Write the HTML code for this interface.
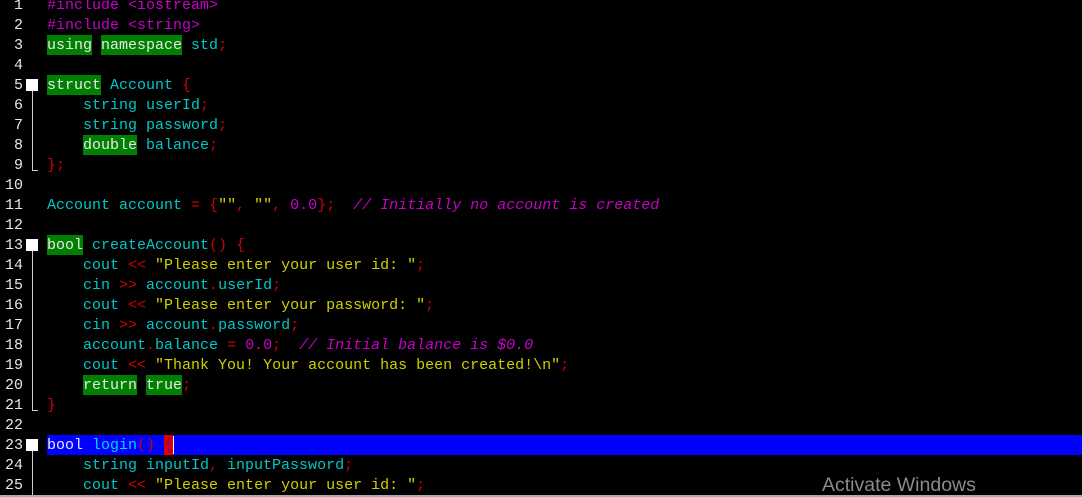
<!DOCTYPE html>
<html><head><style>
body{margin:0;width:1082px;height:497px;background:#000;overflow:hidden;position:relative;font-family:"Liberation Mono",monospace;font-size:15px;}
.l{position:absolute;left:0;height:20px;line-height:22px;width:1082px;white-space:pre;}
.n{position:absolute;right:1059px;color:#e8e8e8;}
.c{position:absolute;left:47px;color:#00c8c8;}
.k{background:#008000;color:#e8e8e8;display:inline-block;height:20px;line-height:22px;vertical-align:top;}
.p{color:#d00000;}
.m{color:#c800c8;}
.s{color:#d0d000;}
.cm{color:#c800c8;font-style:italic;}
.box{position:absolute;left:26px;width:12px;height:12px;background:#fff;}
.vl{position:absolute;left:32px;width:1px;background:#ccc;}
.tk{position:absolute;left:32px;width:6px;height:1px;background:#ccc;}
</style></head><body>
<div class="l" style="top:-5px"><span class="n">1</span><span class="c m">#include &lt;iostream&gt;</span></div>
<div class="l" style="top:15px"><span class="n">2</span><span class="c m">#include &lt;string&gt;</span></div>
<div class="l" style="top:35px"><span class="n">3</span><span class="c"><span class="k">using</span> <span class="k">namespace</span> std<span class="p">;</span></span></div>
<div class="l" style="top:55px"><span class="n">4</span></div>
<div class="l" style="top:75px"><span class="n">5</span><span class="c"><span class="k">struct</span> Account <span class="p">{</span></span></div>
<div class="l" style="top:95px"><span class="n">6</span><span class="c">    string userId<span class="p">;</span></span></div>
<div class="l" style="top:115px"><span class="n">7</span><span class="c">    string password<span class="p">;</span></span></div>
<div class="l" style="top:135px"><span class="n">8</span><span class="c">    <span class="k">double</span> balance<span class="p">;</span></span></div>
<div class="l" style="top:155px"><span class="n">9</span><span class="c"><span class="p">};</span></span></div>
<div class="l" style="top:175px"><span class="n">10</span></div>
<div class="l" style="top:195px"><span class="n">11</span><span class="c">Account account <span class="p">=</span> <span class="p">{</span><span class="s">""</span><span class="p">,</span> <span class="s">""</span><span class="p">,</span> <span class="m">0.0</span><span class="p">};</span>  <span class="cm">// Initially no account is created</span></span></div>
<div class="l" style="top:215px"><span class="n">12</span></div>
<div class="l" style="top:235px"><span class="n">13</span><span class="c"><span class="k">bool</span> createAccount<span class="p">()</span> <span class="p">{</span></span></div>
<div class="l" style="top:255px"><span class="n">14</span><span class="c">    cout <span class="p">&lt;&lt;</span> <span class="s">"Please enter your user id: "</span><span class="p">;</span></span></div>
<div class="l" style="top:275px"><span class="n">15</span><span class="c">    cin <span class="p">&gt;&gt;</span> account<span class="p">.</span>userId<span class="p">;</span></span></div>
<div class="l" style="top:295px"><span class="n">16</span><span class="c">    cout <span class="p">&lt;&lt;</span> <span class="s">"Please enter your password: "</span><span class="p">;</span></span></div>
<div class="l" style="top:315px"><span class="n">17</span><span class="c">    cin <span class="p">&gt;&gt;</span> account<span class="p">.</span>password<span class="p">;</span></span></div>
<div class="l" style="top:335px"><span class="n">18</span><span class="c">    account<span class="p">.</span>balance <span class="p">=</span> <span class="m">0.0</span><span class="p">;</span>  <span class="cm">// Initial balance is $0.0</span></span></div>
<div class="l" style="top:355px"><span class="n">19</span><span class="c">    cout <span class="p">&lt;&lt;</span> <span class="s">"Thank You! Your account has been created!\n"</span><span class="p">;</span></span></div>
<div class="l" style="top:375px"><span class="n">20</span><span class="c">    <span class="k">return</span> <span class="k">true</span><span class="p">;</span></span></div>
<div class="l" style="top:395px"><span class="n">21</span><span class="c"><span class="p">}</span></span></div>
<div class="l" style="top:415px"><span class="n">22</span></div>
<div style="position:absolute;left:47px;top:435px;width:1035px;height:20px;background:#0000ff"></div>
<div class="l" style="top:435px"><span class="n">23</span><span class="c"><span style="color:#e8e8ff">bool</span> <span style="color:#00d8ff">login</span><span class="p">()</span> <span style="background:#e00000;color:#800080;display:inline-block;height:20px;vertical-align:top">{</span><span style="display:inline-block;width:1px;height:18px;background:#fff;vertical-align:top;margin-top:1px"></span></span></div>
<div class="l" style="top:455px"><span class="n">24</span><span class="c">    string inputId<span class="p">,</span> inputPassword<span class="p">;</span></span></div>
<div class="l" style="top:475px"><span class="n">25</span><span class="c">    cout <span class="p">&lt;&lt;</span> <span class="s">"Please enter your user id: "</span><span class="p">;</span></span></div>
<div class="box" style="top:79px"></div><div class="vl" style="top:91px;height:79px"></div><div class="tk" style="top:170px"></div>
<div class="box" style="top:239px"></div><div class="vl" style="top:251px;height:159px"></div><div class="tk" style="top:410px"></div>
<div class="box" style="top:439px"></div><div class="vl" style="top:451px;height:46px"></div>
<div style="position:absolute;left:822px;top:474px;color:#8a8a8a;font-family:'Liberation Sans',sans-serif;font-size:19.5px;">Activate Windows</div>
<div style="position:absolute;left:0;top:495px;width:1082px;height:2px;background:#aaa"></div>
</body></html>
